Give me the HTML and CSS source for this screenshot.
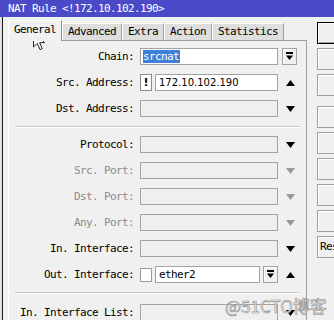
FILE: index.html
```html
<!DOCTYPE html>
<html>
<head>
<meta charset="utf-8">
<link rel="stylesheet" href="styles.css">
</head>
<body>
<div class="title">NAT Rule &lt;!172.10.102.190&gt;</div>
<div class="frame">
  <div class="edge"></div>
  <div class="main">
    <div class="tabs">
      <div class="tab active">General</div>
      <div class="tab">Advanced</div>
      <div class="tab">Extra</div>
      <div class="tab">Action</div>
      <div class="tab">Statistics</div>
    </div>
    <div class="panel">
      <div class="row">
        <div class="label">Chain:</div>
        <div class="field white full-btn"><span class="sel">srcnat</span></div>
        <div class="dd"><svg width="9" height="9" viewBox="0 0 9 9"><rect x="1" y="0" width="7" height="2" fill="#000"/><path d="M1 3.5 H8 L4.5 8 Z" fill="#000"/></svg></div>
      </div>
      <div class="row">
        <div class="label">Src. Address:</div>
        <div class="bang">!</div>
        <div class="field white narrow"><span class="num">172.10.102.190</span></div>
        <div class="arrow"><svg width="9" height="6" viewBox="0 0 9 6"><path d="M0 6 L4.5 0 L9 6 Z" fill="#000"/></svg></div>
      </div>
      <div class="row">
        <div class="label">Dst. Address:</div>
        <div class="field"></div>
        <div class="arrow"><svg width="9" height="6" viewBox="0 0 9 6"><path d="M0 0 L9 0 L4.5 6 Z" fill="#000"/></svg></div>
      </div>
      <div class="sep"></div>
      <div class="row">
        <div class="label">Protocol:</div>
        <div class="field"></div>
        <div class="arrow"><svg width="9" height="6" viewBox="0 0 9 6"><path d="M0 0 L9 0 L4.5 6 Z" fill="#000"/></svg></div>
      </div>
      <div class="row">
        <div class="label dis">Src. Port:</div>
        <div class="field"></div>
        <div class="arrow"><svg width="9" height="6" viewBox="0 0 9 6"><path d="M0 0 L9 0 L4.5 6 Z" fill="#9a9a9a"/></svg></div>
      </div>
      <div class="row">
        <div class="label dis">Dst. Port:</div>
        <div class="field"></div>
        <div class="arrow"><svg width="9" height="6" viewBox="0 0 9 6"><path d="M0 0 L9 0 L4.5 6 Z" fill="#9a9a9a"/></svg></div>
      </div>
      <div class="row">
        <div class="label dis">Any. Port:</div>
        <div class="field"></div>
        <div class="arrow"><svg width="9" height="6" viewBox="0 0 9 6"><path d="M0 0 L9 0 L4.5 6 Z" fill="#9a9a9a"/></svg></div>
      </div>
      <div class="row">
        <div class="label">In. Interface:</div>
        <div class="field"></div>
        <div class="arrow"><svg width="9" height="6" viewBox="0 0 9 6"><path d="M0 0 L9 0 L4.5 6 Z" fill="#000"/></svg></div>
      </div>
      <div class="row">
        <div class="label">Out. Interface:</div>
        <div class="check"></div>
        <div class="field white short"><span class="mono">ether2</span></div>
        <div class="dd small"><svg width="9" height="9" viewBox="0 0 9 9"><rect x="1" y="0" width="7" height="2" fill="#000"/><path d="M1 3.5 H8 L4.5 8 Z" fill="#000"/></svg></div>
        <div class="arrow"><svg width="9" height="6" viewBox="0 0 9 6"><path d="M0 6 L4.5 0 L9 6 Z" fill="#000"/></svg></div>
      </div>
      <div class="sep last"></div>
      <div class="row">
        <div class="label">In. Interface List:</div>
        <div class="field"></div>
        <div class="arrow"><svg width="9" height="6" viewBox="0 0 9 6"><path d="M0 0 L9 0 L4.5 6 Z" fill="#000"/></svg></div>
      </div>
    </div>
  </div>
  <div class="side">
    <div class="btn default"></div>
    <div class="btn"></div>
    <div class="btn"></div>
    <div class="btn gap"></div>
    <div class="btn"></div>
    <div class="btn"></div>
    <div class="btn"></div>
    <div class="btn"></div>
    <div class="btn text">Reset Counters</div>
  </div>
</div>
<svg class="cursor" width="13" height="20" viewBox="0 0 13 20"><path d="M0.5 0.5 L0.5 16 L4.3 12.4 L7 18.6 L9.2 17.6 L6.6 11.6 L11.5 11.6 Z" fill="#fff" stroke="#222" stroke-width="1" stroke-linejoin="round"/></svg>
<div class="watermark">@51CTO博客</div>
</body>
</html>
```

FILE: styles.css
```css
html, body {
  margin: 0;
  padding: 0;
  width: 334px;
  height: 320px;
  overflow: hidden;
  background: #f0f0f0;
}
body {
  position: relative;
  font-family: "DejaVu Sans Mono", "Liberation Mono", monospace;
  font-size: 11px;
  letter-spacing: -0.62px;
  color: #000;
}
.title {
  height: 17px;
  line-height: 17px;
  background: #4a4ac8;
  color: #fff;
  padding-left: 8px;
  white-space: nowrap;
}
.frame {
  display: flex;
  height: 303px;
}
.edge {
  flex: 0 0 2px;
  background: #e2e2e2;
  border-right: 1px solid #1c1c1c;
}
.main {
  flex: 0 0 299px;
  padding-left: 5px;
  display: flex;
  flex-direction: column;
  min-height: 0;
}
.tabs {
  flex: 0 0 23px;
  height: 23px;
  display: flex;
  align-items: flex-end;
}
.tab {
  height: 16px;
  line-height: 16px;
  padding: 0 5px;
  background: #dedede;
  border-top: 1px solid #fff;
  border-left: 1px solid #fff;
  border-right: 1px solid #a0a0a0;
  white-space: nowrap;
}
.tab.active {
  height: 20px;
  line-height: 18px;
  background: #f0f0f0;
  margin-bottom: -1px;
  position: relative;
  z-index: 1;
  border-right: 1px solid #8c8c8c;
}
.panel {
  flex: 1 0 auto;
  border-top: 1px solid #a0a0a0;
  border-left: 1px solid #fff;
  border-right: 1px solid #a0a0a0;
  padding-top: 7px;
}
.row {
  display: flex;
  align-items: center;
  height: 17px;
  margin-bottom: 9px;
}
.label {
  flex: 0 0 125px;
  text-align: right;
  white-space: nowrap;
}
.label.dis {
  color: #8a8a8a;
}
.field {
  flex: 0 0 138px;
  box-sizing: border-box;
  height: 17px;
  margin-left: 6px;
  border: 1px solid #a3a3a3;
  background: #efefef;
  display: flex;
  align-items: center;
  padding-left: 2px;
  overflow: hidden;
  white-space: nowrap;
}
.field.white {
  background: #fff;
}
.field.narrow {
  flex-basis: 123px;
  margin-left: 3px;
}
.field.short {
  flex-basis: 105px;
  margin-left: 3px;
}
.sel {
  background: #3d80d8;
  color: #fff;
  line-height: 13px;
  padding: 0 1px 0 0;
}
.num {
  font-family: "DejaVu Sans", sans-serif;
  font-size: 10px;
  letter-spacing: 0;
  padding-left: 1px;
}
.mono {
  padding-left: 1px;
}
.bang {
  flex: 0 0 12px;
  box-sizing: border-box;
  height: 17px;
  margin-left: 6px;
  border: 1px solid #8a8a8a;
  background: #fff;
  font-weight: bold;
  font-family: "DejaVu Sans", sans-serif;
  font-size: 11px;
  letter-spacing: 0;
  text-align: center;
  line-height: 15px;
}
.check {
  flex: 0 0 12px;
  box-sizing: border-box;
  height: 14px;
  margin-left: 6px;
  border: 1px solid #9a9a9a;
  background: #fff;
}
.dd {
  flex: 0 0 15px;
  box-sizing: border-box;
  height: 17px;
  margin-left: 4px;
  border: 1px solid #a3a3a3;
  background: #f0f0f0;
  box-shadow: inset 1px 1px #fff;
  display: flex;
  align-items: center;
  justify-content: center;
}
.dd.small {
  margin-left: 3px;
}
.arrow {
  flex: 0 0 9px;
  height: 6px;
  margin-left: 8px;
  display: flex;
}
.sep {
  height: 1px;
  border-bottom: 1px solid #fff;
  background: #c8c8c8;
  margin: 0 6px 8px 6px;
}
.sep.last {
  margin-bottom: 10px;
}
.side {
  flex: 0 0 40px;
  margin-left: 10px;
  padding-top: 5px;
}
.btn {
  box-sizing: border-box;
  width: 40px;
  height: 22px;
  margin-bottom: 4px;
  border: 1px solid #a0a0a0;
  background: #f0f0f0;
  box-shadow: inset 1px 1px #fff;
}
.btn.default {
  border: 1px solid #000;
  box-shadow: inset 1px 1px #fff, inset -1px -1px #a0a0a0;
}
.btn.gap {
  margin-top: 10px;
}
.btn.text {
  width: 100px;
  padding-left: 2px;
  line-height: 20px;
  white-space: nowrap;
}
.cursor {
  position: absolute;
  left: 33px;
  top: 31px;
}
.watermark {
  position: absolute;
  left: 225px;
  top: 293px;
  font-family: "Noto Sans CJK SC", "Noto Sans", sans-serif;
  font-size: 17px;
  letter-spacing: 0;
  color: #f2f2f2;
  -webkit-text-stroke: 0.6px #8c8c8c;
  white-space: nowrap;
}
```
